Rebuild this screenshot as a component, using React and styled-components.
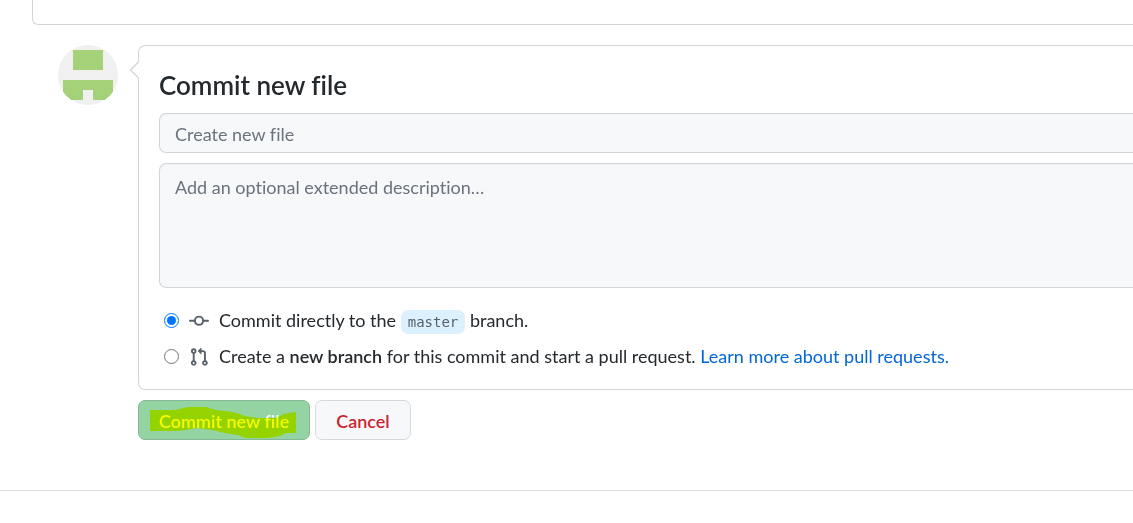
import React, { useState } from 'react';
import styled, { createGlobalStyle } from 'styled-components';

const GlobalStyle = createGlobalStyle`
  * {
    box-sizing: border-box;
  }

  body {
    margin: 0;
    overflow-x: hidden;
    background-color: #fff;
    color: #24292e;
    font-family: Lato, "Open Sans", sans-serif;
    font-size: 18px;
    font-variant-ligatures: none;
    line-height: 26px;
  }
`;

const Page = styled.main`
  padding-left: 32px;
`;

const EditorEnd = styled.div`
  height: 25px;
  border: 1px solid #d1d5da;
  border-width: 0 0 1px 1px;
  border-bottom-left-radius: 6px;
`;

const CommitForm = styled.form`
  display: flex;
  align-items: flex-start;
  gap: 20px;
  padding: 20px 0 50px 26px;
`;

const Avatar = styled.svg`
  flex: none;
  width: 60px;
  height: 60px;
  border-radius: 50%;
  background-color: #f0f0f0;
`;

const FormBody = styled.div`
  flex: 1;
  min-width: 0;
`;

const CommitBox = styled.section`
  position: relative;
  padding: 20px 0 20px 20px;
  border: 1px solid #d1d5da;
  border-right: 0;
  border-radius: 7px 0 0 7px;
`;

const Caret = styled.svg`
  position: absolute;
  top: 14px;
  left: -10px;
  width: 10px;
  height: 20px;
`;

const Title = styled.h3`
  margin: 0 0 8px;
  font-size: 26px;
  font-weight: 600;
  line-height: 39px;
`;

const fieldStyles = `
  display: block;
  width: 100%;
  padding: 7px 15px 5px;
  border: 1px solid #d1d5da;
  border-right: 0;
  border-radius: 7px 0 0 7px;
  outline: none;
  background-color: #f6f8fa;
  box-shadow: inset 0 1px 0 rgba(225, 228, 232, 0.3);
  color: #24292e;
  font: inherit;

  &::placeholder {
    color: #6a737d;
    opacity: 1;
  }
`;

const SummaryInput = styled.input`
  ${fieldStyles}
  height: 40px;
  margin-bottom: 10px;
`;

const DescriptionInput = styled.textarea`
  ${fieldStyles}
  height: 125px;
  padding-top: 10px;
  margin-bottom: 19px;
  resize: none;
`;

const Choice = styled.div`
  display: flex;
  align-items: center;
  height: 26px;
  padding-left: 5px;

  & + & {
    margin-top: 10px;
  }
`;

const Radio = styled.input`
  width: 15px;
  height: 15px;
  margin: 0 10px 0 0;
  accent-color: #0075ff;
`;

const ChoiceIcon = styled.svg`
  flex: none;
  width: 20px;
  height: 20px;
  margin: 2px 10px 0 0;
  fill: #586069;
`;

const BranchName = styled.code`
  display: inline-block;
  padding: 0 7px;
  border-radius: 7px;
  background-color: #dbf1ff;
  color: #586069;
  font-family: "DejaVu Sans Mono", monospace;
  font-size: 14px;
  line-height: 24px;
`;

const Strong = styled.strong`
  font-weight: 600;
`;

const Link = styled.a`
  color: #0366d6;
  text-decoration: none;
`;

const Actions = styled.div`
  display: flex;
  gap: 5px;
  margin-top: 10px;
`;

const Button = styled.button`
  position: relative;
  height: 40px;
  padding: 2px 20px 1px;
  border: 1px solid ${(props) => (props.$primary ? '#84b894' : '#d5d8dc')};
  border-radius: 7px;
  background-color: ${(props) => (props.$primary ? '#94d3a2' : '#f6f8fa')};
  color: ${(props) => (props.$primary ? 'rgba(255, 255, 255, 0.9)' : '#cb2431')};
  font: inherit;
  font-weight: 600;
`;

const Marker = styled.svg`
  position: absolute;
  top: 4px;
  left: 11px;
  width: 147px;
  height: 33px;
  fill: #ff0;
  mix-blend-mode: multiply;
  pointer-events: none;
`;

const Footer = styled.footer`
  border-top: 1px solid #dcdfe3;
`;

const App = () => {
  const [target, setTarget] = useState('direct');

  return (
    <>
      <GlobalStyle />
      <Page>
        <EditorEnd />
        <CommitForm onSubmit={(e) => e.preventDefault()}>
          <Avatar viewBox="0 0 60 60" fill="#a5d278" shapeRendering="crispEdges" aria-hidden="true">
            <path d="M15 5h30v20H15zM5 35h50v20H35V45H25v10H5z" />
          </Avatar>
          <FormBody>
            <CommitBox>
              <Caret viewBox="0 0 10 20" aria-hidden="true">
                <path d="M10 1.5L1.5 10L10 18.5" fill="#fff" stroke="#d1d5da" strokeWidth="1.3" />
              </Caret>
              <Title>Commit new file</Title>
              <SummaryInput aria-label="Commit summary" placeholder="Create new file" />
              <DescriptionInput
                aria-label="Optional extended description"
                placeholder="Add an optional extended description…"
              />
              <Choice>
                <Radio
                  type="radio"
                  id="direct"
                  name="target"
                  checked={target === 'direct'}
                  onChange={() => setTarget('direct')}
                />
                <ChoiceIcon viewBox="0 0 16 16" aria-hidden="true">
                  <path fillRule="evenodd" d="M10.5 7.75a2.5 2.5 0 11-5 0 2.5 2.5 0 015 0zm1.43.75a4.002 4.002 0 01-7.86 0H.75a.75.75 0 110-1.5h3.32a4.001 4.001 0 017.86 0h3.32a.75.75 0 110 1.5h-3.32z" />
                </ChoiceIcon>
                <label htmlFor="direct">
                  Commit directly to the
                  {' '}
                  <BranchName>master</BranchName>
                  {' '}
                  branch.
                </label>
              </Choice>
              <Choice>
                <Radio
                  type="radio"
                  id="branch"
                  name="target"
                  checked={target === 'branch'}
                  onChange={() => setTarget('branch')}
                />
                <ChoiceIcon viewBox="0 0 16 16" aria-hidden="true">
                  <path fillRule="evenodd" d="M7.177 3.073L9.573.677A.25.25 0 0110 .854v4.792a.25.25 0 01-.427.177L7.177 3.427a.25.25 0 010-.354zM3.75 2.5a.75.75 0 100 1.5.75.75 0 000-1.5zm-2.25.75a2.25 2.25 0 113 2.122v5.256a2.251 2.251 0 11-1.5 0V5.372A2.25 2.25 0 011.5 3.25zM11 2.5h-1V4h1a1 1 0 011 1v5.628a2.251 2.251 0 101.5 0V5A2.5 2.5 0 0011 2.5zm1 10.25a.75.75 0 111.5 0 .75.75 0 01-1.5 0zM3.75 12a.75.75 0 100 1.5.75.75 0 000-1.5z" />
                </ChoiceIcon>
                <label htmlFor="branch">
                  Create a
                  {' '}
                  <Strong>new branch</Strong>
                  {' '}
                  for this commit and start a pull request.
                  {' '}
                  <Link href="#pull-requests">Learn more about pull requests.</Link>
                </label>
              </Choice>
            </CommitBox>
            <Actions>
              <Button type="submit" $primary>
                Commit new file
                <Marker viewBox="0 0 147 33" aria-hidden="true">
                  <path d="M0 5H25L38 2H56L66 5L83 7L95 11L108 13H126L134 9L146 7V28H136L130 31L118 33H96L88 30L75 28L62 25L48 23L28 26H0z" />
                </Marker>
              </Button>
              <Button type="button">Cancel</Button>
            </Actions>
          </FormBody>
        </CommitForm>
      </Page>
      <Footer />
    </>
  );
};

export default App;
